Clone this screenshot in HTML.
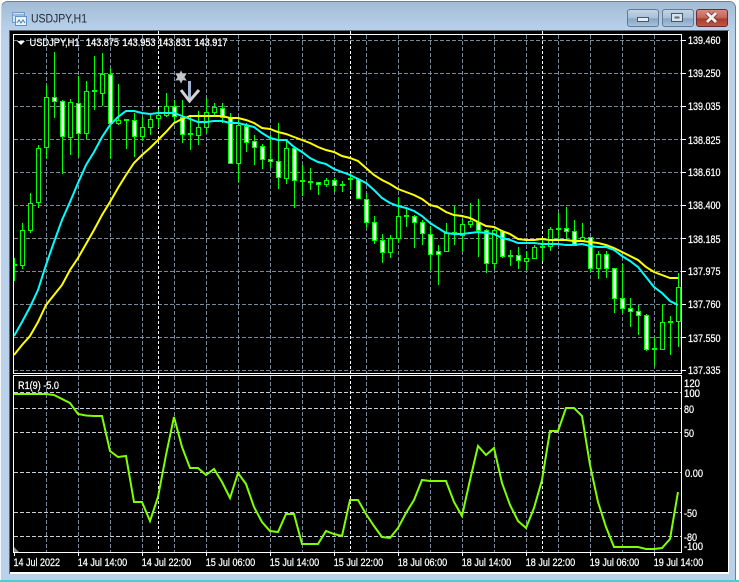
<!DOCTYPE html>
<html><head><meta charset="utf-8"><title>USDJPY,H1</title>
<style>
html,body{margin:0;padding:0;background:#fff;width:739px;height:582px;overflow:hidden}
svg{display:block}
text{font-family:"Liberation Sans",sans-serif;font-size:11px;fill:#fff;stroke:#fff;stroke-width:.25px}
</style></head><body>
<svg xmlns="http://www.w3.org/2000/svg" width="739" height="582" viewBox="0 0 739 582">
<defs>
<linearGradient id="tb" x1="0" y1="0" x2="0" y2="1"><stop offset="0" stop-color="#a5bdd6"/><stop offset="0.06" stop-color="#b9d1ea"/></linearGradient>
<linearGradient id="bn" x1="0" y1="0" x2="0" y2="1"><stop offset="0" stop-color="#c4d4e4"/><stop offset="0.5" stop-color="#a9c0d8"/><stop offset="0.55" stop-color="#88a5c4"/><stop offset="1" stop-color="#a7c3dd"/></linearGradient>
<linearGradient id="cl" x1="0" y1="0" x2="0" y2="1"><stop offset="0" stop-color="#d68c80"/><stop offset="0.5" stop-color="#c26557"/><stop offset="0.55" stop-color="#aa3c2c"/><stop offset="1" stop-color="#bd5a49"/></linearGradient>
<linearGradient id="tg" x1="0" y1="0" x2="0" y2="1"><stop offset="0" stop-color="#a3bcd5"/><stop offset="1" stop-color="#b9d1ea"/></linearGradient>
</defs>
<rect width="739" height="582" fill="#fff"/>
<rect x="1.5" y="1.5" width="734" height="590" rx="6" fill="url(#tb)" stroke="#6f7f8f"/>
<rect x="2" y="2" width="733" height="29" rx="5" fill="url(#tg)"/>
<rect x="0" y="580" width="739" height="2" fill="#45d0d8"/>
<rect x="0" y="0" width="2" height="580" fill="#eef2f6" opacity=".7"/>
<rect x="9" y="30" width="720" height="544" fill="#fff"/>
<rect x="9" y="30" width="1" height="544" fill="#5c6670"/>
<rect x="9" y="30" width="720" height="1" fill="#5c6670"/>
<rect x="10" y="31" width="718" height="541" fill="#000"/>

<!-- title icon -->
<rect x="12.5" y="12.5" width="12" height="10" fill="#cfe2f5" stroke="#6d9bd0"/>
<rect x="15.5" y="16.5" width="11" height="9" fill="#eaf3fb" stroke="#5f90c8"/>
<path d="M13 15h11" stroke="#5f90c8"/>
<path d="M17 23l2-3 2 3 2-3 2 3" fill="none" stroke="#4a7bb5"/>
<text x="31" y="22.5" style="font-size:12px;fill:#1c2530;stroke:none" textLength="56" lengthAdjust="spacingAndGlyphs">USDJPY,H1</text>

<!-- window buttons -->
<rect x="627.5" y="9.5" width="31" height="17" rx="2.5" fill="url(#bn)" stroke="#627a93"/>
<rect x="637.5" y="17.5" width="11" height="4" fill="#e6edf3" stroke="#46586c"/>
<rect x="662.5" y="9.5" width="31" height="17" rx="2.5" fill="url(#bn)" stroke="#627a93"/>
<rect x="671.5" y="13.5" width="11" height="8" fill="#d8e2ea" stroke="#46586c"/>
<rect x="674.5" y="16.5" width="5" height="2" fill="#5a6b7d"/>
<rect x="696.5" y="9.5" width="31" height="17" rx="2.5" fill="url(#cl)" stroke="#6e2a2e"/>
<path d="M707 13l9 9M716 13l-9 9" stroke="#5b2a28" stroke-width="4.4" fill="none"/>
<path d="M707 13l9 9M716 13l-9 9" stroke="#f4f0ee" stroke-width="3" fill="none"/>

<!-- grid -->
<g stroke="#778899" stroke-width="1" stroke-dasharray="4 2" fill="none" shape-rendering="crispEdges">
<path d="M14 40.5H681M14 73.5H681M14 106.5H681M14 139.5H681M14 172.5H681M14 205.5H681M14 238.5H681M14 271.5H681M14 304.5H681M14 337.5H681M14 370.5H681"/>
<path d="M46.5 35V373M78.5 35V373M110.5 35V373M142.5 35V373M174.5 35V373M206.5 35V373M238.5 35V373M270.5 35V373M302.5 35V373M334.5 35V373M366.5 35V373M398.5 35V373M430.5 35V373M462.5 35V373M494.5 35V373M526.5 35V373M558.5 35V373M590.5 35V373M622.5 35V373M654.5 35V373"/>
<path d="M46.5 376V552M78.5 376V552M110.5 376V552M142.5 376V552M174.5 376V552M206.5 376V552M238.5 376V552M270.5 376V552M302.5 376V552M334.5 376V552M366.5 376V552M398.5 376V552M430.5 376V552M462.5 376V552M494.5 376V552M526.5 376V552M558.5 376V552M590.5 376V552M622.5 376V552M654.5 376V552"/>
</g>
<g stroke="#c8d0d8" stroke-width="1" stroke-dasharray="4 2" fill="none" shape-rendering="crispEdges">
<path d="M14 392.5H681M14 408.5H681M14 432.5H681M14 472.5H681M14 512.5H681M14 536.5H681"/>
</g>
<g stroke="#fff" stroke-width="1" stroke-dasharray="3 2" fill="none" shape-rendering="crispEdges">
<path d="M158.5 31V552M350.5 31V552M542.5 31V552"/>
</g>

<!-- candle wicks -->
<path shape-rendering="crispEdges" stroke="#00ff00" stroke-width="1" fill="none" d="M14.5 258V281M22.5 223V269M30.5 193V233M38.5 145V208M46.5 85V159M54.5 52V118M62.5 100V174M70.5 99V155M78.5 76V157M86.5 81V139M94.5 56V110M102.5 53V106M110.5 68V159M118.5 84V125M126.5 119V149M134.5 113V157M142.5 117V141M150.5 114V135M158.5 109V128M166.5 93V117M174.5 100V123M182.5 100V143M190.5 117V150M198.5 111V145M206.5 98V133M214.5 103V115M222.5 103V123M230.5 113V164M238.5 120V182M246.5 123V152M254.5 135V165M262.5 144V169M270.5 135V168M278.5 123V189M286.5 140V184M294.5 147V208M302.5 165V196M310.5 168V190M318.5 182V195M326.5 178V187M334.5 178V192M342.5 181V192M350.5 173V190M358.5 178V199M366.5 193V228M374.5 216V244M382.5 234V263M390.5 235V258M398.5 197V243M406.5 209V227M414.5 215V248M422.5 220V245M430.5 226V270M438.5 245V285M446.5 223V252M454.5 206V245M462.5 219V252M470.5 203V228M478.5 199V257M486.5 229V273M494.5 229V269M502.5 230V258M510.5 250V266M518.5 247V269M526.5 251V270M534.5 245V259M542.5 238V261M550.5 227V251M558.5 213V240M566.5 207V240M574.5 220V245M582.5 223V242M590.5 237V272M598.5 251V279M606.5 251V278M614.5 268V313M622.5 264V313M630.5 298V327M638.5 305V335M646.5 314V351M654.5 337V366M662.5 304V350M670.5 316V355M678.5 273V347"/>
<!-- dojis -->
<path shape-rendering="crispEdges" stroke="#00ff00" stroke-width="2" fill="none" d="M14 265h3M92 91h5M124 120h5M188 134h5M300 181h5M308 182h5M340 185h5M348 179h5M404 216h5M452 233h5M508 256h5M540 247h5M556 229h5M652 349h5M668 322h5"/>
<!-- black bodies -->
<path shape-rendering="crispEdges" stroke="#00ff00" stroke-width="1" fill="#000" d="M20.5 230.5h4V265.5h-4zM28.5 203.5h4V230.5h-4zM36.5 148.5h4V202.5h-4zM44.5 97.5h4V147.5h-4zM68.5 102.5h4V137.5h-4zM84.5 91.5h4V133.5h-4zM100.5 74.5h4V93.5h-4zM116.5 120.5h4V123.5h-4zM140.5 127.5h4V136.5h-4zM148.5 119.5h4V127.5h-4zM156.5 115.5h4V118.5h-4zM164.5 106.5h4V115.5h-4zM196.5 127.5h4V135.5h-4zM204.5 112.5h4V127.5h-4zM212.5 107.5h4V112.5h-4zM236.5 125.5h4V163.5h-4zM284.5 148.5h4V178.5h-4zM324.5 180.5h4V184.5h-4zM388.5 238.5h4V252.5h-4zM396.5 216.5h4V238.5h-4zM444.5 233.5h4V251.5h-4zM460.5 224.5h4V235.5h-4zM468.5 221.5h4V224.5h-4zM492.5 230.5h4V263.5h-4zM524.5 258.5h4V261.5h-4zM532.5 247.5h4V258.5h-4zM548.5 229.5h4V246.5h-4zM580.5 237.5h4V240.5h-4zM596.5 254.5h4V268.5h-4zM660.5 322.5h4V349.5h-4zM676.5 287.5h4V321.5h-4z"/>
<!-- white bodies -->
<path shape-rendering="crispEdges" stroke="#00ff00" stroke-width="1" fill="#fff" d="M52.5 97.5h4V101.5h-4zM60.5 101.5h4V136.5h-4zM76.5 103.5h4V133.5h-4zM108.5 74.5h4V123.5h-4zM132.5 120.5h4V136.5h-4zM172.5 106.5h4V116.5h-4zM180.5 117.5h4V134.5h-4zM220.5 108.5h4V117.5h-4zM228.5 117.5h4V163.5h-4zM244.5 126.5h4V142.5h-4zM252.5 141.5h4V147.5h-4zM260.5 146.5h4V159.5h-4zM268.5 159.5h4V161.5h-4zM276.5 161.5h4V177.5h-4zM292.5 148.5h4V180.5h-4zM316.5 182.5h4V184.5h-4zM332.5 180.5h4V185.5h-4zM356.5 179.5h4V198.5h-4zM364.5 199.5h4V222.5h-4zM372.5 222.5h4V240.5h-4zM380.5 240.5h4V252.5h-4zM412.5 216.5h4V222.5h-4zM420.5 222.5h4V233.5h-4zM428.5 234.5h4V254.5h-4zM436.5 251.5h4V254.5h-4zM476.5 222.5h4V230.5h-4zM484.5 230.5h4V263.5h-4zM500.5 231.5h4V256.5h-4zM516.5 255.5h4V260.5h-4zM564.5 228.5h4V231.5h-4zM572.5 231.5h4V245.5h-4zM588.5 237.5h4V268.5h-4zM604.5 254.5h4V268.5h-4zM612.5 268.5h4V298.5h-4zM620.5 298.5h4V308.5h-4zM628.5 308.5h4V311.5h-4zM636.5 311.5h4V315.5h-4zM644.5 315.5h4V349.5h-4z"/>

<!-- moving averages -->
<polyline fill="none" stroke="#ffff00" stroke-width="2" points="14,355 22,345 30,336 38,322 46,305 54,295 62,285 70,270 78,258 86,244 94,230 102,215 110,202 118,188 126,175 134,163 142,155 150,148 158,140 166,132 174,123 182,119 190,116 198,116 206,116 214,116 222,116 230,118 238,118 246,120 254,123 262,128 270,129 278,132 286,134 294,137 302,140 310,143 318,147 326,150 334,152 342,156 350,158 358,161 366,168 374,175 382,180 390,184 398,189 406,192 414,195 422,199 430,205 438,207 446,212 454,215 462,216 470,218 478,222 486,226 494,227 502,231 510,234 518,239 526,240 534,240 542,239 550,240 558,240 566,240 574,241 582,241 590,242 598,243 606,245 614,248 622,252 630,256 638,260 646,267 654,272 662,275 670,278 678,278"/>
<polyline fill="none" stroke="#00ffff" stroke-width="2" points="14,336 22,322 30,307 38,290 46,265 54,242 62,220 70,202 78,183 86,165 94,152 102,137 110,125 118,117 126,111 134,111 142,113 150,114 158,113 166,113 174,113 182,116 190,119 198,122 206,122 214,121 222,121 230,123 238,123 246,125 254,127 262,133 270,138 278,140 286,140 294,147 302,152 310,158 318,162 326,164 334,169 342,172 350,175 358,179 366,183 374,190 382,198 390,203 398,206 406,208 414,211 422,216 430,223 438,228 446,233 454,234 462,234 470,233 478,232 486,233 494,234 502,238 510,240 518,243 526,243 534,243 542,244 550,244 558,244 566,245 574,245 582,244 590,246 598,247 606,247 614,250 622,256 630,261 638,267 646,277 654,287 662,293 670,301 678,305"/>

<!-- oscillator -->
<polyline fill="none" stroke="#7fff00" stroke-width="2" points="14,394 46,394 54,395 62,399 70,403 78,414 86,415.5 94,416 102,416 110,451 118,457 126,456 134,502 142,502 150,521 158,497 166,455 174,417 182,447 190,468 198,468 206,475 214,469 222,482 230,498 238,473 246,484 254,507 262,522 270,531 278,532 286,514 294,514 302,544 310,544 318,544 326,531 334,534 342,536 350,500 358,500 366,514 374,526 382,537 390,538 398,528 406,513 414,500 422,480 430,481 438,481 446,481 454,502 462,516 470,480 478,446 486,455 494,448 502,483 510,505 518,521 526,528 534,508 542,480 550,431 558,431 566,408 574,408 582,416 590,465 598,502 606,527 614,547 622,547 630,547 638,547 646,549 654,549 662,548 670,539 678,492"/>

<!-- frames and ticks -->
<g fill="none" stroke="#fff" stroke-width="1" shape-rendering="crispEdges">
<rect x="13.5" y="34.5" width="668" height="339"/>
<rect x="13.5" y="375.5" width="668" height="177"/>
<path d="M682 40.5h4M682 73.5h4M682 106.5h4M682 139.5h4M682 172.5h4M682 205.5h4M682 238.5h4M682 271.5h4M682 304.5h4M682 337.5h4M682 370.5h4"/>
<path d="M14.5 553v3M78.5 553v3M142.5 553v3M206.5 553v3M270.5 553v3M334.5 553v3M398.5 553v3M462.5 553v3M526.5 553v3M590.5 553v3M654.5 553v3"/>
</g>
<path d="M14 547l5 5h-5z" fill="#8a8f94"/>

<!-- header -->
<path d="M17 41h8l-4 4z" fill="#fff"/>
<text x="29.5" y="46" textLength="50" lengthAdjust="spacingAndGlyphs">USDJPY,H1</text>
<text x="86" y="46" textLength="33" lengthAdjust="spacingAndGlyphs">143.875</text>
<text x="122.5" y="46" textLength="33" lengthAdjust="spacingAndGlyphs">143.953</text>
<text x="158" y="46" textLength="33" lengthAdjust="spacingAndGlyphs">143.831</text>
<text x="194.5" y="46" textLength="33" lengthAdjust="spacingAndGlyphs">143.917</text>
<text x="18" y="389" textLength="41" lengthAdjust="spacingAndGlyphs">R1(9) -5.0</text>

<!-- star & arrow -->
<path d="M181 71l1.600 3.200 3.600-.4-2 3.200 2 3.200-3.600-.4-1.600 3.200-1.600-3.200-3.600.4 2-3.200-2-3.200 3.600.4z" fill="#c4c8cc" stroke="#b4b8bc" stroke-width=".6"/>
<path d="M189.500 81V101" stroke="#9fb4d2" stroke-width="3" fill="none"/>
<path d="M181 90l8.500 11 9.500-11" stroke="#d0d4d8" stroke-width="3" fill="none"/>

<!-- price labels -->
<g>
<text x="688" y="44" textLength="32.500" lengthAdjust="spacingAndGlyphs">139.460</text>
<text x="688" y="77" textLength="32.500" lengthAdjust="spacingAndGlyphs">139.250</text>
<text x="688" y="110" textLength="32.500" lengthAdjust="spacingAndGlyphs">139.035</text>
<text x="688" y="144" textLength="32.500" lengthAdjust="spacingAndGlyphs">138.825</text>
<text x="688" y="176" textLength="32.500" lengthAdjust="spacingAndGlyphs">138.610</text>
<text x="688" y="209" textLength="32.500" lengthAdjust="spacingAndGlyphs">138.400</text>
<text x="688" y="243" textLength="32.500" lengthAdjust="spacingAndGlyphs">138.185</text>
<text x="688" y="275" textLength="32.500" lengthAdjust="spacingAndGlyphs">137.975</text>
<text x="688" y="308" textLength="32.500" lengthAdjust="spacingAndGlyphs">137.760</text>
<text x="688" y="342" textLength="32.500" lengthAdjust="spacingAndGlyphs">137.550</text>
<text x="688" y="374" textLength="32.500" lengthAdjust="spacingAndGlyphs">137.335</text>
<text x="684" y="387" textLength="16" lengthAdjust="spacingAndGlyphs">120</text>
<text x="684" y="397" textLength="16" lengthAdjust="spacingAndGlyphs">100</text>
<text x="684" y="413" textLength="10" lengthAdjust="spacingAndGlyphs">80</text>
<text x="684" y="437" textLength="10" lengthAdjust="spacingAndGlyphs">50</text>
<text x="685" y="477" textLength="18" lengthAdjust="spacingAndGlyphs">0.00</text>
<text x="684" y="517" textLength="13" lengthAdjust="spacingAndGlyphs">-50</text>
<text x="684" y="541" textLength="13" lengthAdjust="spacingAndGlyphs">-80</text>
<text x="684" y="550" textLength="19" lengthAdjust="spacingAndGlyphs">-100</text>
</g>

<!-- date labels -->
<g>
<text x="13.500" y="566" textLength="46.500" lengthAdjust="spacingAndGlyphs">14 Jul 2022</text>
<text x="77.700" y="566" textLength="49.500" lengthAdjust="spacingAndGlyphs">14 Jul 14:00</text>
<text x="141.700" y="566" textLength="49.500" lengthAdjust="spacingAndGlyphs">14 Jul 22:00</text>
<text x="205.700" y="566" textLength="49.500" lengthAdjust="spacingAndGlyphs">15 Jul 06:00</text>
<text x="269.700" y="566" textLength="49.500" lengthAdjust="spacingAndGlyphs">15 Jul 14:00</text>
<text x="333.700" y="566" textLength="49.500" lengthAdjust="spacingAndGlyphs">15 Jul 22:00</text>
<text x="397.700" y="566" textLength="49.500" lengthAdjust="spacingAndGlyphs">18 Jul 06:00</text>
<text x="461.700" y="566" textLength="49.500" lengthAdjust="spacingAndGlyphs">18 Jul 14:00</text>
<text x="525.700" y="566" textLength="49.500" lengthAdjust="spacingAndGlyphs">18 Jul 22:00</text>
<text x="589.700" y="566" textLength="49.500" lengthAdjust="spacingAndGlyphs">19 Jul 06:00</text>
<text x="653.700" y="566" textLength="49.500" lengthAdjust="spacingAndGlyphs">19 Jul 14:00</text>
</g>
</svg>
</body></html>
